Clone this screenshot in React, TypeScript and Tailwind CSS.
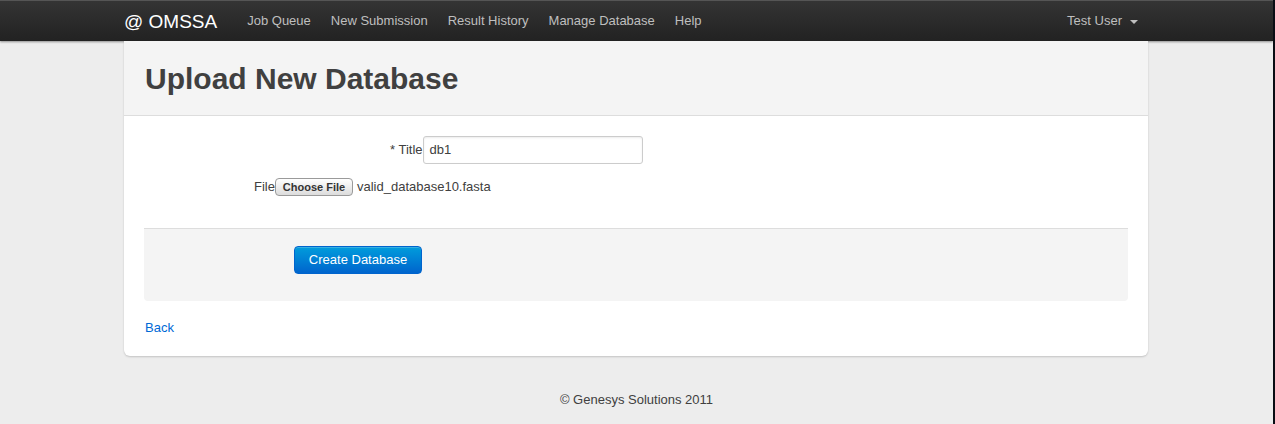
import React from "react";

export default function App() {
  const navLinks = ["Job Queue", "New Submission", "Result History", "Manage Database", "Help"];
  return (
    <div
      className="flex h-[424px] w-full overflow-hidden bg-[#ededed] text-[13px] text-[#404040]"
      style={{ fontFamily: '"Liberation Sans", Arial, sans-serif' }}
    >
      <div className="flex flex-1 flex-col">
        {/* Navbar */}
        <div className="h-[41px] w-full border-t border-[#555] bg-gradient-to-b from-[#343434] to-[#222] shadow-[0_1px_2px_rgba(0,0,0,0.4)]">
          <div className="ml-[124px] flex h-full w-[1024px] items-center">
            <span className="pr-[20px] text-[19px] leading-none text-white">@ OMSSA</span>
            {navLinks.map((l) => (
              <span key={l} className="px-[10px] text-[13px] text-[#bfbfbf]">
                {l}
              </span>
            ))}
            <div className="ml-auto flex items-center pr-[10px] text-[13px] text-[#bfbfbf]">
              <span>Test User</span>
              <span className="ml-[8px] mt-[1px] h-0 w-0 border-x-[4px] border-t-[4px] border-x-transparent border-t-[#bfbfbf]" />
            </div>
          </div>
        </div>

        {/* Card */}
        <div className="ml-[124px] w-[1024px] rounded-b-[6px] bg-white shadow-[0_1px_2px_rgba(0,0,0,0.18)]">
          <div className="flex h-[75px] items-center border-b border-[#dddddd] bg-[#f4f4f4] px-[21px] pt-[2px]">
            <h1 className="text-[30px] font-bold leading-none text-[#404040]">Upload New Database</h1>
          </div>
          <div className="px-[20px] pt-[20px]">
            <div className="flex items-center pl-[246px]">
              <label className="text-[13px] text-[#404040]">* Title</label>
              <div className="flex h-[28px] w-[220px] items-center rounded-[3px] border border-[#cccccc] px-[6px] text-[13px] text-[#404040] shadow-[inset_0_1px_2px_rgba(0,0,0,0.08)]">
                db1
              </div>
            </div>
            <div className="mt-[13px] flex items-center pl-[110px]">
              <label className="text-[13px] text-[#404040]">File</label>
              <span className="flex h-[18px] w-[78px] items-center justify-center rounded-[4px] border border-[#9a9a9a] bg-gradient-to-b from-white to-[#dcdcdc] text-[11px] font-bold text-[#333]">
                Choose File
              </span>
              <span className="ml-[4px] text-[13px] text-[#404040]">valid_database10.fasta</span>
            </div>
            <div className="mt-[31px] rounded-b-[4px] border-t border-[#dddddd] bg-[#f4f4f4] pb-[27px] pl-[150px] pt-[17px]">
              <button className="flex h-[28px] w-[128px] items-center justify-center rounded-[4px] border border-[#0064cd] bg-gradient-to-b from-[#049cdb] to-[#0064cd] text-[13px] text-white shadow-[inset_0_1px_0_rgba(255,255,255,0.2)]">
                Create Database
              </button>
            </div>
            <div className="pb-[19px] pl-[1px] pt-[17px]">
              <a className="text-[13px] text-[#0069d6]">Back</a>
            </div>
          </div>
        </div>

        {/* Footer */}
        <div className="flex flex-1 justify-center pt-[34px] text-[13px] text-[#404040]">
          © Genesys Solutions 2011
        </div>
      </div>
      <div className="w-[2px] bg-[#0a0d14]" />
    </div>
  );
}
